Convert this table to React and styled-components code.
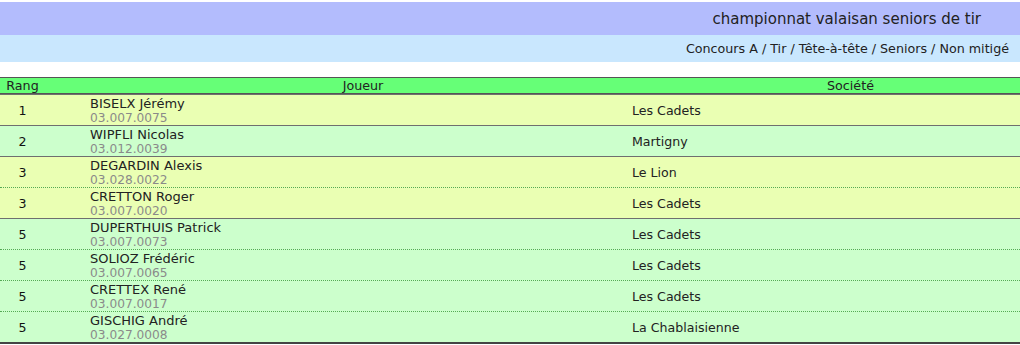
import React from 'react';
import styled, { createGlobalStyle } from 'styled-components';

const GlobalStyle = createGlobalStyle`
  body {
    margin: 0;
    padding-top: 2px;
    background: #ffffff;
    font-family: Verdana, "DejaVu Sans", sans-serif;
    color: #222222;
  }
`;

const TitleBar = styled.div`
  height: 33px;
  background-color: #b3bcfd;
  display: flex;
  align-items: center;
  justify-content: flex-end;
  padding-right: 39px;
  font-size: 15px;
`;

const SubBar = styled.div`
  height: 27px;
  background-color: #c9e7fe;
  display: flex;
  align-items: center;
  justify-content: flex-end;
  padding-right: 11px;
  font-size: 12.7px;
`;

const Table = styled.div`
  margin-top: 15px;
  border-bottom: 2px solid #444444;
`;

const HeadRow = styled.div`
  display: grid;
  grid-template-columns: 45px 636px 1fr;
  height: 15px;
  background-color: #66ff77;
  border-top: 1px solid #555555;
  border-bottom: 1px solid #555555;
  font-size: 12.7px;
  line-height: 15px;
  text-align: center;
`;

const Row = styled.div`
  display: grid;
  grid-template-columns: 45px 577px 1fr;
  align-items: center;
  height: 30px;
  background-color: ${({ $yellow }) => ($yellow ? '#eaffb3' : '#ccffcc')};
  border-top: ${({ $dotted }) => ($dotted ? '1px dotted #55aa55' : '1px solid #6f6f6f')};
  font-size: 12.6px;
`;

const Rank = styled.div`
  text-align: center;
  color: #111111;
`;

const Player = styled.div`
  padding-left: 45px;
  display: flex;
  flex-direction: column;
`;

const Name = styled.span`
  font-size: 13px;
  line-height: 15px;
`;

const Code = styled.span`
  font-size: 12.2px;
  line-height: 14px;
  color: #8a8a8a;
`;

const Club = styled.div`
  padding-left: 10px;
`;

const players = [
  { rank: 1, name: 'BISELX Jérémy', code: '03.007.0075', club: 'Les Cadets' },
  { rank: 2, name: 'WIPFLI Nicolas', code: '03.012.0039', club: 'Martigny' },
  { rank: 3, name: 'DEGARDIN Alexis', code: '03.028.0022', club: 'Le Lion' },
  { rank: 3, name: 'CRETTON Roger', code: '03.007.0020', club: 'Les Cadets' },
  { rank: 5, name: 'DUPERTHUIS Patrick', code: '03.007.0073', club: 'Les Cadets' },
  { rank: 5, name: 'SOLIOZ Frédéric', code: '03.007.0065', club: 'Les Cadets' },
  { rank: 5, name: 'CRETTEX René', code: '03.007.0017', club: 'Les Cadets' },
  { rank: 5, name: 'GISCHIG André', code: '03.027.0008', club: 'La Chablaisienne' },
];

const App = () => {
  let group = 0;
  return (
    <>
      <GlobalStyle />
      <TitleBar>championnat valaisan seniors de tir</TitleBar>
      <SubBar>Concours A / Tir / Tête-à-tête / Seniors / Non mitigé</SubBar>
      <Table>
        <HeadRow>
          <div>Rang</div>
          <div>Joueur</div>
          <div>Société</div>
        </HeadRow>
        {players.map((p, i) => {
          const same = i > 0 && players[i - 1].rank === p.rank;
          if (i > 0 && !same) group += 1;
          return (
            <Row key={p.code} $yellow={group % 2 === 0} $dotted={same}>
              <Rank>{p.rank}</Rank>
              <Player>
                <Name>{p.name}</Name>
                <Code>{p.code}</Code>
              </Player>
              <Club>{p.club}</Club>
            </Row>
          );
        })}
      </Table>
    </>
  );
};

export default App;
